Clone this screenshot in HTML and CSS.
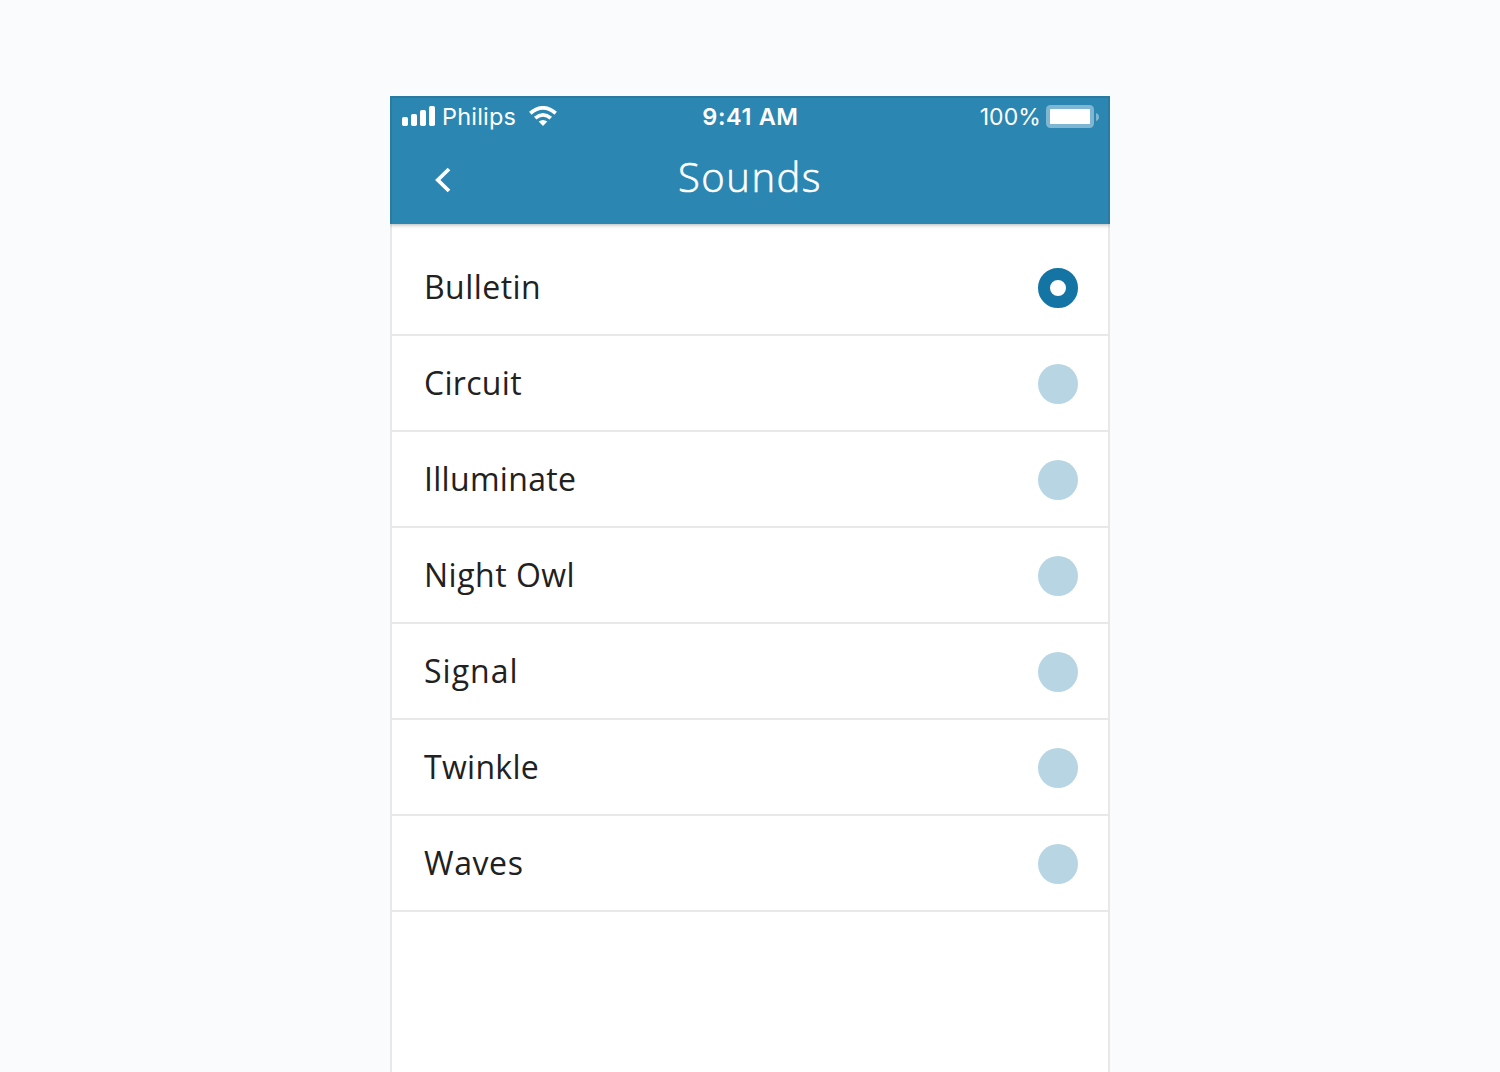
FILE: index.html
```html
<!DOCTYPE html>
<html lang="en">
<head>
<meta charset="utf-8">
<title>Sounds</title>
<link rel="stylesheet" href="styles.css">
</head>
<body>
<main class="phone">
  <header class="header">
    <div class="status">
      <div class="status-left">
        <svg class="signal" width="33" height="20" viewBox="0 0 33 20" fill="#fff"><rect y="11" width="6" height="9" rx="1.7"/><rect x="9" y="8" width="6" height="12" rx="1.7"/><rect x="18" y="4" width="6" height="16" rx="1.7"/><rect x="27" width="6" height="20" rx="1.7"/></svg>
        <span class="carrier">Philips</span>
        <svg class="wifi" width="28" height="20" viewBox="0 0 28 20" fill="none" stroke="#fff" stroke-width="3.8"><path d="M1.3 7.2Q14-3.4 26.7 7.2"/><path d="M6.2 12.1Q14 5.7 21.8 12.1"/><path d="M9.7 15.6Q14 12.4 18.3 15.6L14 20Z" fill="#fff" stroke="none"/></svg>
      </div>
      <span class="time">9:41 AM</span>
      <div class="status-right">
        <span class="percent">100%</span>
        <svg class="battery" width="53" height="23" viewBox="0 0 53 23"><rect width="48" height="23" rx="4.5" fill="#fff" fill-opacity=".4"/><rect x="4" y="4" width="40" height="15" rx=".7" fill="#fff"/><path d="M50 8Q53 9 53 12T50 16Z" fill="#fff" fill-opacity=".4"/></svg>
      </div>
    </div>
    <div class="navbar">
      <svg class="back" width="16" height="26" viewBox="0 0 16 26" fill="none" stroke="#fff" stroke-width="3.8"><path d="M14 2L2.8 13L14 24"/></svg>
      <h1 class="title">Sounds</h1>
      <span></span>
    </div>
  </header>
  <ul class="list">
    <li class="row"><span class="label bulletin">Bulletin</span><i class="radio selected"></i></li>
    <li class="row"><span class="label circuit">Circuit</span><i class="radio"></i></li>
    <li class="row"><span class="label illuminate">Illuminate</span><i class="radio"></i></li>
    <li class="row"><span class="label night-owl">Night Owl</span><i class="radio"></i></li>
    <li class="row"><span class="label sig">Signal</span><i class="radio"></i></li>
    <li class="row"><span class="label twinkle">Twinkle</span><i class="radio"></i></li>
    <li class="row"><span class="label waves">Waves</span><i class="radio"></i></li>
  </ul>
</main>
</body>
</html>
```
FILE: styles.css
```css
* { box-sizing: border-box; }
body {
  margin: 0;
  height: 1072px;
  padding-top: 96px;
  overflow: hidden;
  background: #fafbfd;
  font-family: "Open Sans", "Noto Sans", sans-serif;
}
.phone {
  position: relative;
  width: 720px;
  height: 1000px;
  margin: 0 auto;
  background: #fff;
}
.phone::after {
  content: "";
  position: absolute;
  inset: 0;
  border: 2px solid rgba(30, 30, 30, .1);
  pointer-events: none;
}
.header {
  height: 128px;
  background: #2b86b2;
  color: #fff;
  box-shadow: 0 1px 4px rgba(0, 0, 0, .3);
  clip-path: inset(0 0 -8px 0);
}
.status {
  display: grid;
  grid-template-columns: 1fr auto 1fr;
  align-items: center;
  height: 40px;
  padding: 0 11px 0 12px;
  font: 400 24px/38px Inter, sans-serif;
}
.status-left, .status-right { display: flex; align-items: center; }
.status-right { justify-content: flex-end; gap: 5px; }
.carrier, .time, .percent { padding-top: 2px; }
.carrier { width: 74px; margin-left: 7px; font-size: 23.5px; letter-spacing: .2px; }
.wifi { margin-left: 13px; }
.time { font-weight: 600; font-size: 23.5px; letter-spacing: .6px; }
.percent { font-size: 23px; letter-spacing: .1px; }
.navbar {
  display: grid;
  grid-template-columns: 1fr auto 1fr;
  align-items: center;
  height: 88px;
  padding: 0 45px;
}
.title {
  margin: 0 0 7px;
  font-size: 40px;
  font-weight: 300;
  line-height: 60px;
  letter-spacing: 1.5px;
  -webkit-text-stroke: .6px currentColor;
}
.back { height: 26px; }
.list { list-style: none; margin: 0 2px; padding: 16px 0 0; }
.row {
  display: flex;
  align-items: center;
  justify-content: space-between;
  height: 96px;
  padding: 2px 30px 0 32px;
  border-bottom: 2px solid #e8e8e8;
}
.label {
  margin-bottom: 3px;
  font-size: 32px;
  font-weight: 400;
  line-height: 48px;
  color: #212121;
}
.bulletin { letter-spacing: .45px; }
.circuit { letter-spacing: .3px; }
.illuminate { letter-spacing: .3px; }
.night-owl { letter-spacing: .5px; }
.sig { letter-spacing: 1px; }
.twinkle { letter-spacing: .3px; }
.waves { letter-spacing: .6px; }
.radio {
  width: 40px;
  height: 40px;
  border-radius: 50%;
  background: #b8d5e3;
}
.radio.selected { background: #fff; border: 12px solid #1474a4; }
```
